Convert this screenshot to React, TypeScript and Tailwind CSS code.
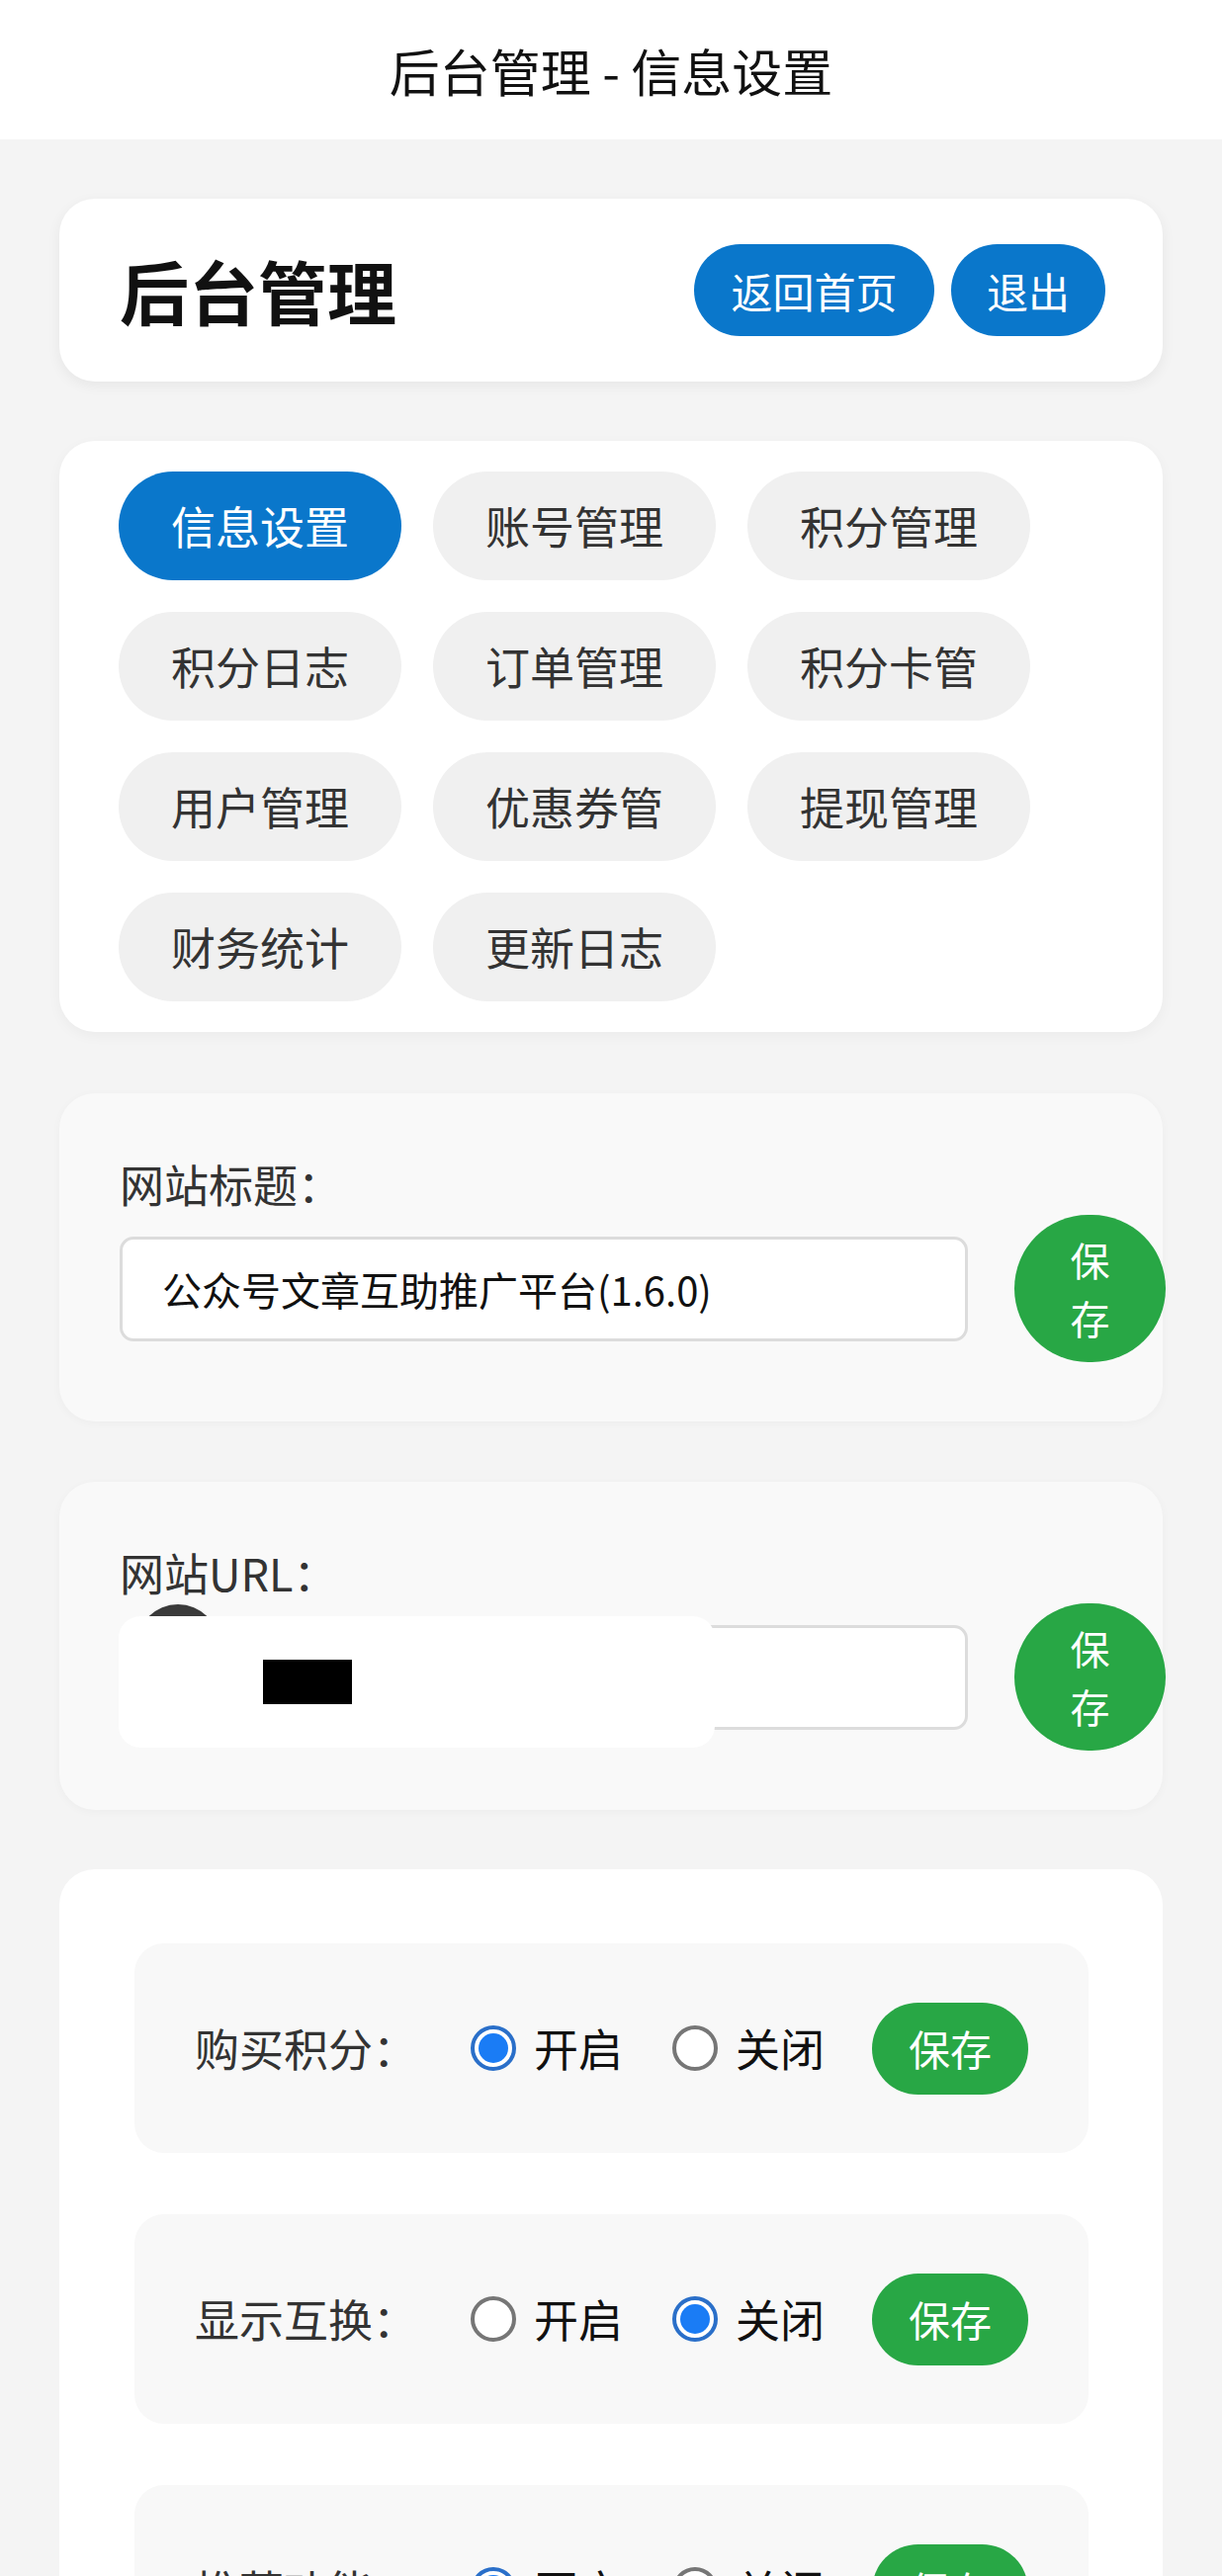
import React, { useState } from 'react';

const navItems = [
  '信息设置',
  '账号管理',
  '积分管理',
  '积分日志',
  '订单管理',
  '积分卡管',
  '用户管理',
  '优惠券管',
  '提现管理',
  '财务统计',
  '更新日志',
];

const Radio = ({ checked, label, onClick }: { checked: boolean; label: string; onClick: () => void }) => (
  <label className="flex items-center gap-[18px] cursor-pointer" onClick={onClick}>
    {checked ? (
      <span className="flex items-center justify-center w-[46px] h-[46px] rounded-full border-[4px] border-[#2a6fc9] bg-white">
        <span className="w-[30px] h-[30px] rounded-full bg-[#1a7cf5]" />
      </span>
    ) : (
      <span className="w-[46px] h-[46px] rounded-full border-[4px] border-[#767676] bg-white" />
    )}
    <span className="text-[45px] leading-[60px] text-[#111]">{label}</span>
  </label>
);

const SwitchRow = ({ title, initial }: { title: string; initial: boolean }) => {
  const [on, setOn] = useState(initial);
  return (
    <div className="flex items-center h-[212px] pl-[61px] rounded-[30px] bg-[#f8f8f8]">
      <span className="w-[279px] text-[45px] leading-[60px] text-[#333]">{title}：</span>
      <div className="flex items-center gap-[50px]">
        <Radio checked={on} label="开启" onClick={() => setOn(true)} />
        <Radio checked={!on} label="关闭" onClick={() => setOn(false)} />
      </div>
      <button className="ml-[48px] h-[93px] px-[37px] rounded-full bg-[#28a745] text-white text-[42px] leading-[56px]">
        保存
      </button>
    </div>
  );
};

const FieldCard = ({
  label,
  value,
  children,
}: {
  label: string;
  value: string;
  children?: React.ReactNode;
}) => (
  <div className="relative bg-[#f9f9f9] rounded-[36px] px-[61px] py-[60px] shadow-[0_2px_10px_rgba(0,0,0,0.03)]">
    <div className="text-[45px] leading-[63px] text-[#333]">{label}</div>
    <div className="flex items-center gap-[47px] w-[1058px]">
      <input
        readOnly
        value={value}
        className="w-[858px] h-[106px] px-[40px] rounded-[14px] border-[3px] border-[#dcdcdc] bg-white text-[40px] text-[#111] outline-none"
      />
      <button className="w-[153px] h-[149px] px-[38px] rounded-full bg-[#28a745] text-white text-[40px] leading-[59px]">
        保存
      </button>
    </div>
    {children}
  </div>
);

export default function App() {
  const [active, setActive] = useState('信息设置');

  return (
    <div className="min-h-[2606px] bg-[#f4f4f4] font-['Noto_Sans_CJK_SC','Noto_Sans',sans-serif]">
      <header className="h-[141px] bg-white flex items-center justify-center">
        <h1 className="text-[51px] leading-[60px] text-[#111]">后台管理 - 信息设置</h1>
      </header>

      <main className="px-[60px] pt-[60px] flex flex-col">
        <div className="h-[185px] bg-white rounded-[36px] pl-[61px] pr-[58px] flex items-center justify-between shadow-[0_4px_14px_rgba(0,0,0,0.06)]">
          <span className="text-[70px] leading-[80px] font-bold text-[#111]">后台管理</span>
          <div className="flex gap-[17px]">
            <button className="h-[93px] w-[243px] rounded-full bg-[#0a77cb] text-white text-[42px] leading-[56px]">
              返回首页
            </button>
            <button className="h-[93px] w-[156px] rounded-full bg-[#0a77cb] text-white text-[42px] leading-[56px]">
              退出
            </button>
          </div>
        </div>

        <div className="mt-[60px] bg-white rounded-[36px] px-[60px] py-[31px] flex flex-wrap gap-[32px] shadow-[0_4px_14px_rgba(0,0,0,0.04)]">
          {navItems.map((item) => (
            <button
              key={item}
              onClick={() => setActive(item)}
              className={`w-[286px] h-[110px] rounded-full text-[45px] leading-[60px] ${
                active === item ? 'bg-[#0a77cb] text-white' : 'bg-[#f0f0f0] text-[#333]'
              }`}
            >
              {item}
            </button>
          ))}
        </div>

        <div className="mt-[62px]">
          <FieldCard label="网站标题：" value="公众号文章互助推广平台(1.6.0)" />
        </div>

        <div className="mt-[61px]">
          <FieldCard label="网站URL：" value="">
            {/* redacted area in the screenshot */}
            <div className="absolute left-[78px] top-[124px] w-[84px] h-[84px] rounded-full bg-[#3a3a3a]" />
            <div className="absolute left-[60px] top-[136px] w-[603px] h-[133px] rounded-[22px] bg-white" />
            <div className="absolute left-[206px] top-[180px] w-[90px] h-[45px] bg-black" />
          </FieldCard>
        </div>

        <div className="mt-[60px] bg-white rounded-[36px] pl-[76px] pr-[75px] pt-[75px] pb-[75px] flex flex-col gap-[62px]">
          <SwitchRow title="购买积分" initial={true} />
          <SwitchRow title="显示互换" initial={false} />
          <SwitchRow title="推荐功能" initial={true} />
          <SwitchRow title="签到功能" initial={true} />
        </div>
      </main>
    </div>
  );
}
